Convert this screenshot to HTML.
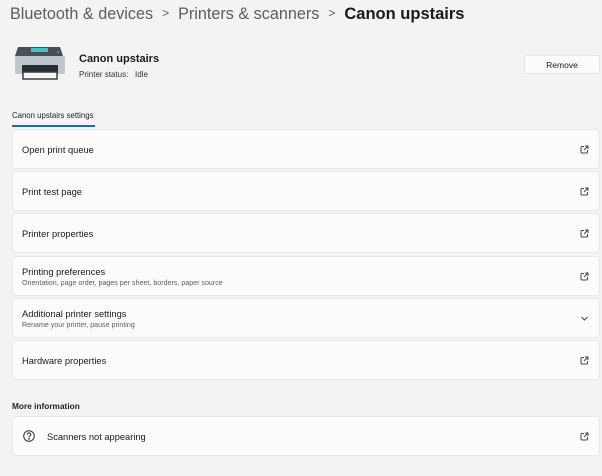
<!DOCTYPE html>
<html><head><style>
*{margin:0;padding:0;box-sizing:border-box}
body{width:602px;height:476px;background:#f3f3f3;font-family:"Liberation Sans",sans-serif;color:#1a1a1a;position:relative;overflow:hidden}
.bc{position:absolute;top:5px;left:10px;font-size:16.2px;white-space:nowrap;color:#5d5d5d}
.bc b{color:#1a1a1a;font-weight:bold;font-size:16.5px}
.bc .s{font-size:12px;margin:0 9px;position:relative;top:-2px}
.card{position:absolute;left:12px;width:588px;height:40px;background:#fbfbfb;border:1px solid #e8e8e8;border-radius:4px}
.card .t{position:absolute;left:9px;font-size:9.3px;color:#1a1a1a}
.card .d{position:absolute;left:9px;font-size:7.1px;color:#606060}
.ic{position:absolute;right:10px;top:15px}
</style></head><body>
<div class="bc">Bluetooth &amp; devices<span class="s">&gt;</span>Printers &amp; scanners<span class="s">&gt;</span><b>Canon upstairs</b></div>
<svg style="position:absolute;left:14px;top:46px" width="52" height="35" viewBox="0 0 52 35">
<path d="M4 1h42l3 9H1z" fill="#4a4f55"/>
<rect x="17" y="2" width="17" height="4" fill="#35c6c9"/>
<circle cx="44" cy="6" r="1" fill="#3c3"/>
<rect x="1" y="10" width="50" height="18" rx="2" fill="#bfc6cc"/>
<rect x="8" y="19" width="36" height="8" fill="#2a2d31"/>
<rect x="9" y="26" width="34" height="7" fill="#f6f6f6" stroke="#3a3d41" stroke-width="1.5"/>
</svg>
<div style="position:absolute;left:79px;top:53px;font-size:11px;font-weight:bold">Canon upstairs</div>
<div style="position:absolute;left:79px;top:70px;font-size:8px;color:#333">Printer status:&nbsp;&nbsp; Idle</div>
<div style="position:absolute;left:524px;top:55px;width:76px;height:19px;background:#fbfbfb;border:1px solid #e3e3e3;border-radius:3px;font-size:8.5px;text-align:center;line-height:18px">Remove</div>
<div style="position:absolute;left:12px;top:111px;font-size:7.8px;color:#222">Canon upstairs settings</div>
<div style="position:absolute;left:12px;top:125px;width:83px;height:2px;background:#1e66b8"></div>

<div class="card" style="top:129px"><div class="t" style="top:15px">Open print queue</div><svg class="ic" width="9" height="9" viewBox="0 0 9 9" fill="none" stroke="#444" stroke-width="1"><path d="M4 1.5H2a1 1 0 0 0-1 1v4.5a1 1 0 0 0 1 1h4.5a1 1 0 0 0 1-1V5M5 1h3v3M8 1L4 5"/></svg></div>
<div class="card" style="top:171px"><div class="t" style="top:15px">Print test page</div><svg class="ic" width="9" height="9" viewBox="0 0 9 9" fill="none" stroke="#444" stroke-width="1"><path d="M4 1.5H2a1 1 0 0 0-1 1v4.5a1 1 0 0 0 1 1h4.5a1 1 0 0 0 1-1V5M5 1h3v3M8 1L4 5"/></svg></div>
<div class="card" style="top:213px"><div class="t" style="top:15px">Printer properties</div><svg class="ic" width="9" height="9" viewBox="0 0 9 9" fill="none" stroke="#444" stroke-width="1"><path d="M4 1.5H2a1 1 0 0 0-1 1v4.5a1 1 0 0 0 1 1h4.5a1 1 0 0 0 1-1V5M5 1h3v3M8 1L4 5"/></svg></div>
<div class="card" style="top:256px"><div class="t" style="top:10px">Printing preferences</div><div class="d" style="top:22px">Orientation, page order, pages per sheet, borders, paper source</div><svg class="ic" width="9" height="9" viewBox="0 0 9 9" fill="none" stroke="#444" stroke-width="1"><path d="M4 1.5H2a1 1 0 0 0-1 1v4.5a1 1 0 0 0 1 1h4.5a1 1 0 0 0 1-1V5M5 1h3v3M8 1L4 5"/></svg></div>
<div class="card" style="top:298px"><div class="t" style="top:10px">Additional printer settings</div><div class="d" style="top:22px">Rename your printer, pause printing</div><svg class="ic" width="9" height="9" viewBox="0 0 9 9" fill="none" stroke="#444" stroke-width="1"><path d="M1.5 3l3 3 3-3"/></svg></div>
<div class="card" style="top:340px"><div class="t" style="top:15px">Hardware properties</div><svg class="ic" width="9" height="9" viewBox="0 0 9 9" fill="none" stroke="#444" stroke-width="1"><path d="M4 1.5H2a1 1 0 0 0-1 1v4.5a1 1 0 0 0 1 1h4.5a1 1 0 0 0 1-1V5M5 1h3v3M8 1L4 5"/></svg></div>

<div style="position:absolute;left:12px;top:401px;font-size:8.3px;font-weight:bold;color:#222">More information</div>
<div class="card" style="top:416px"><svg style="position:absolute;left:10px;top:13px" width="12" height="12" viewBox="0 0 12 12" fill="none" stroke="#333" stroke-width="1"><circle cx="6" cy="6" r="5.3"/><path d="M4.3 4.6a1.7 1.7 0 1 1 2.4 1.5c-.5.3-.7.6-.7 1.2"/><circle cx="6" cy="8.8" r=".4" fill="#333"/></svg><div class="t" style="left:34px;top:15px">Scanners not appearing</div><svg class="ic" width="9" height="9" viewBox="0 0 9 9" fill="none" stroke="#444" stroke-width="1"><path d="M4 1.5H2a1 1 0 0 0-1 1v4.5a1 1 0 0 0 1 1h4.5a1 1 0 0 0 1-1V5M5 1h3v3M8 1L4 5"/></svg></div>
</body></html>
